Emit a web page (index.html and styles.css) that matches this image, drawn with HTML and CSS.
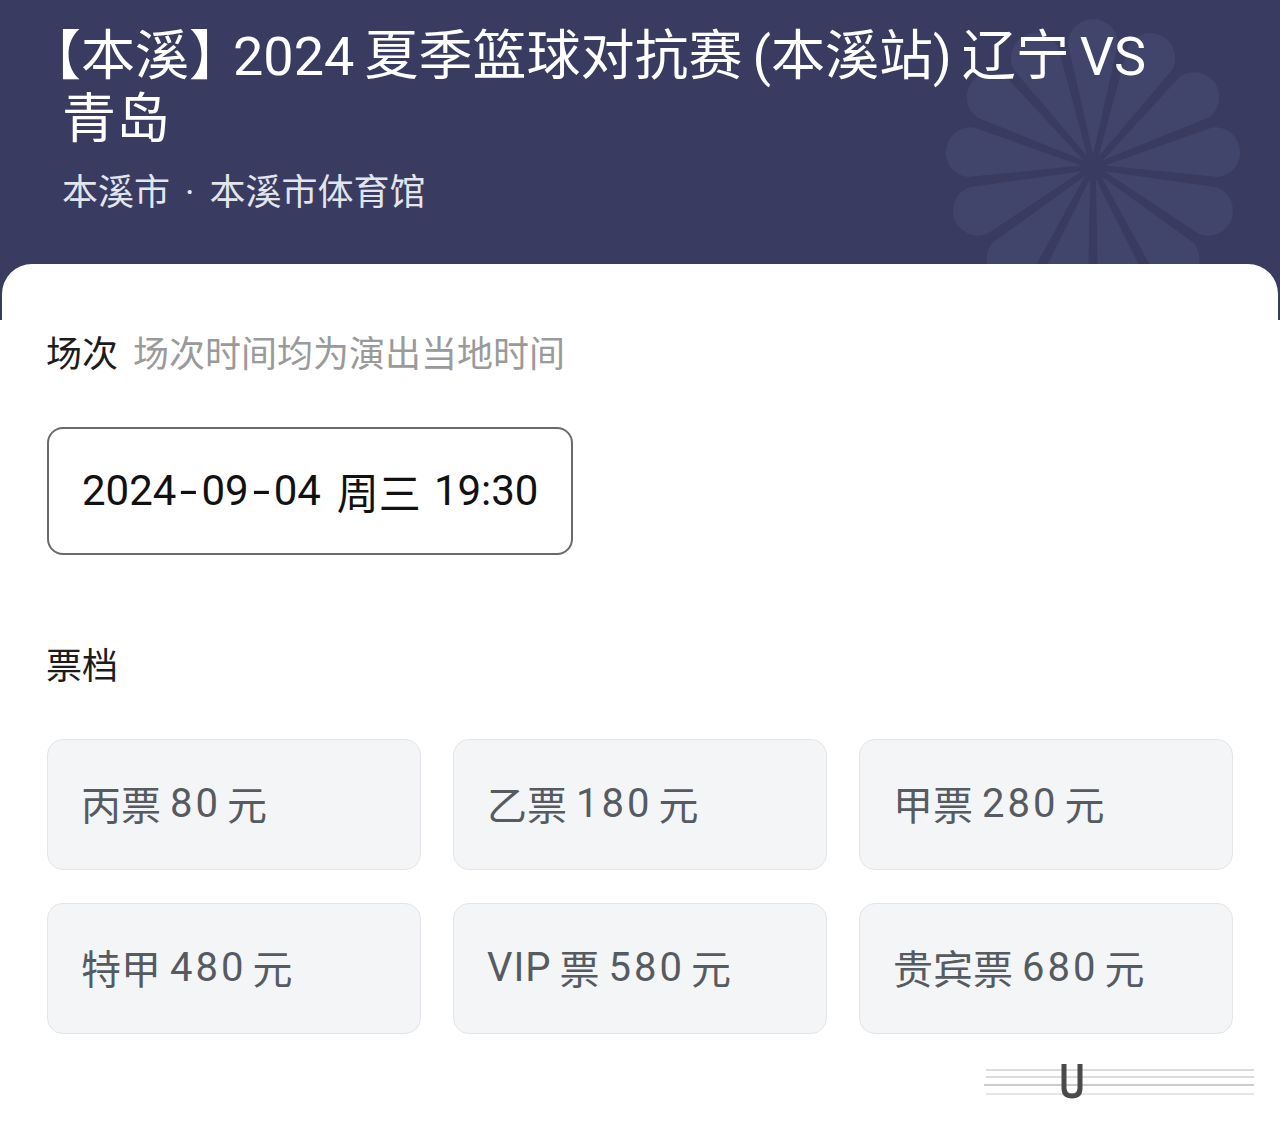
FILE: index.html
```html
<!DOCTYPE html>
<html lang="zh-CN">
<head>
<meta charset="utf-8">
<title>【本溪】2024夏季篮球对抗赛(本溪站)辽宁VS青岛</title>
<link rel="stylesheet" href="styles.css">
</head>
<body>
<header class="hero">
  <svg class="flower" viewBox="-160 -160 320 320" width="320" height="320" aria-hidden="true">
    <g fill="#42456b">
      <path id="petal" d="M0,-12 L-25,-123 A25,25 0 0 1 25,-123 Z"/>
      <use href="#petal" transform="rotate(27.7)"/>
      <use href="#petal" transform="rotate(55.4)"/>
      <use href="#petal" transform="rotate(83.1)"/>
      <use href="#petal" transform="rotate(110.8)"/>
      <use href="#petal" transform="rotate(138.5)"/>
      <use href="#petal" transform="rotate(166.2)"/>
      <use href="#petal" transform="rotate(193.8)"/>
      <use href="#petal" transform="rotate(221.5)"/>
      <use href="#petal" transform="rotate(249.2)"/>
      <use href="#petal" transform="rotate(276.9)"/>
      <use href="#petal" transform="rotate(304.6)"/>
      <use href="#petal" transform="rotate(332.3)"/>
    </g>
  </svg>
  <h1 class="title"><span class="br-open">【</span>本溪<span class="br-close">】</span>2024<span class="gap"></span>夏季篮球对抗赛<span class="gap"></span>(本溪站)<span class="gap"></span>辽宁<span class="gap"></span>VS <span class="line2">青岛</span></h1>
  <p class="venue">本溪市<span class="dot">·</span>本溪市体育馆</p>
</header>

<main class="card">
  <h2 class="section-title">场次<span class="hint">场次时间均为演出当地时间</span></h2>
  <div class="session">2024<span class="dash">-</span>09<span class="dash">-</span>04<span class="sp"></span>周三<span class="sp sp-b"></span>19:30</div>

  <h2 class="section-title tickets-title">票档</h2>
  <div class="tickets">
    <div class="ticket">丙票<span class="num">80</span>元</div>
    <div class="ticket">乙票<span class="num">180</span>元</div>
    <div class="ticket">甲票<span class="num">280</span>元</div>
    <div class="ticket">特甲<span class="num">480</span>元</div>
    <div class="ticket"><span class="lat">VIP</span>票<span class="num">580</span>元</div>
    <div class="ticket">贵宾票<span class="num">680</span>元</div>
  </div>

  <div class="footer">
    <svg class="mark" width="272" height="40" viewBox="0 0 272 40" aria-hidden="true">
      <g stroke="#dcdcdc" stroke-width="2">
        <line x1="2" y1="10" x2="270" y2="10"/>
        <line x1="2" y1="17" x2="270" y2="17"/>
        <line x1="0" y1="25" x2="270" y2="25" stroke="#cccccc"/>
        <line x1="2" y1="34" x2="270" y2="34" stroke="#e6e6e6"/>
      </g>
      <path d="M80 4 V28 Q80 36 88 36 Q96 36 96 28 V4" fill="none" stroke="#4a4a4a" stroke-width="5"/>
    </svg>
  </div>
</main>
</body>
</html>
```
FILE: styles.css
```css
* { box-sizing: border-box; }

html, body {
  margin: 0;
  padding: 0;
  background: #ffffff;
}

body {
  width: 1280px;
  height: 1128px;
  overflow: hidden;
  font-family: "Roboto", "Noto Sans CJK SC", sans-serif;
}

.hero {
  position: relative;
  height: 320px;
  background: #393b61;
  padding: 25px 110px 0 62px;
  overflow: hidden;
}

.flower {
  position: absolute;
  left: 933px;
  top: 7px;
}

.title {
  position: relative;
  margin: 0;
  font-size: 54px;
  line-height: 63px;
  font-weight: 400;
  color: #ffffff;
}

.br-open {
  margin-left: -35px;
}

.br-close {
  font-feature-settings: "halt";
  margin-right: 17px;
}

.gap {
  display: inline-block;
  width: 10px;
}

.venue {
  position: relative;
  margin: 18px 0 0 0;
  font-size: 36px;
  line-height: 48px;
  color: #e3e4ec;
}

.dot {
  margin: 0 15px;
}

.card {
  position: relative;
  z-index: 1;
  margin: -56px 2px 0 2px;
  background: #ffffff;
  border-radius: 30px 30px 0 0;
  padding: 67px 0 0 44px;
  height: 864px;
}

.section-title {
  margin: 0;
  font-size: 36px;
  line-height: 48px;
  font-weight: 400;
  color: #1c1c1c;
}

.hint {
  margin-left: 15px;
  color: #9a9a9a;
}

.session {
  margin-top: 48px;
  margin-left: 1px;
  width: 526px;
  height: 128px;
  border: 2px solid #6a6a6a;
  border-radius: 16px;
  padding: 0 0 2px 33px;
  display: flex;
  align-items: center;
  font-size: 42px;
  color: #111111;
}

.dash {
  display: inline-block;
  width: 25px;
  text-align: center;
  transform: scaleX(1.5);
}

.sp {
  display: inline-block;
  width: 16px;
}

.sp-b {
  width: 13px;
}

.tickets-title {
  margin-top: 88px;
}

.tickets {
  margin-top: 48px;
  margin-left: 1px;
  display: grid;
  grid-template-columns: repeat(3, 374px);
  grid-auto-rows: 131px;
  column-gap: 32px;
  row-gap: 33px;
}

.ticket {
  display: flex;
  align-items: center;
  padding: 0 0 3px 33px;
  background: #f4f5f7;
  border: 1px solid #e4e5e8;
  border-radius: 16px;
  font-size: 40px;
  color: #565b61;
}

.num {
  margin: 0 6px 0 9px;
  letter-spacing: 3px;
}

.lat {
  margin-right: 8px;
  letter-spacing: 1px;
}

.footer {
  display: flex;
  justify-content: flex-end;
  margin-top: 26px;
  padding-right: 22px;
}

.mark {
  filter: blur(0.6px);
}
```
